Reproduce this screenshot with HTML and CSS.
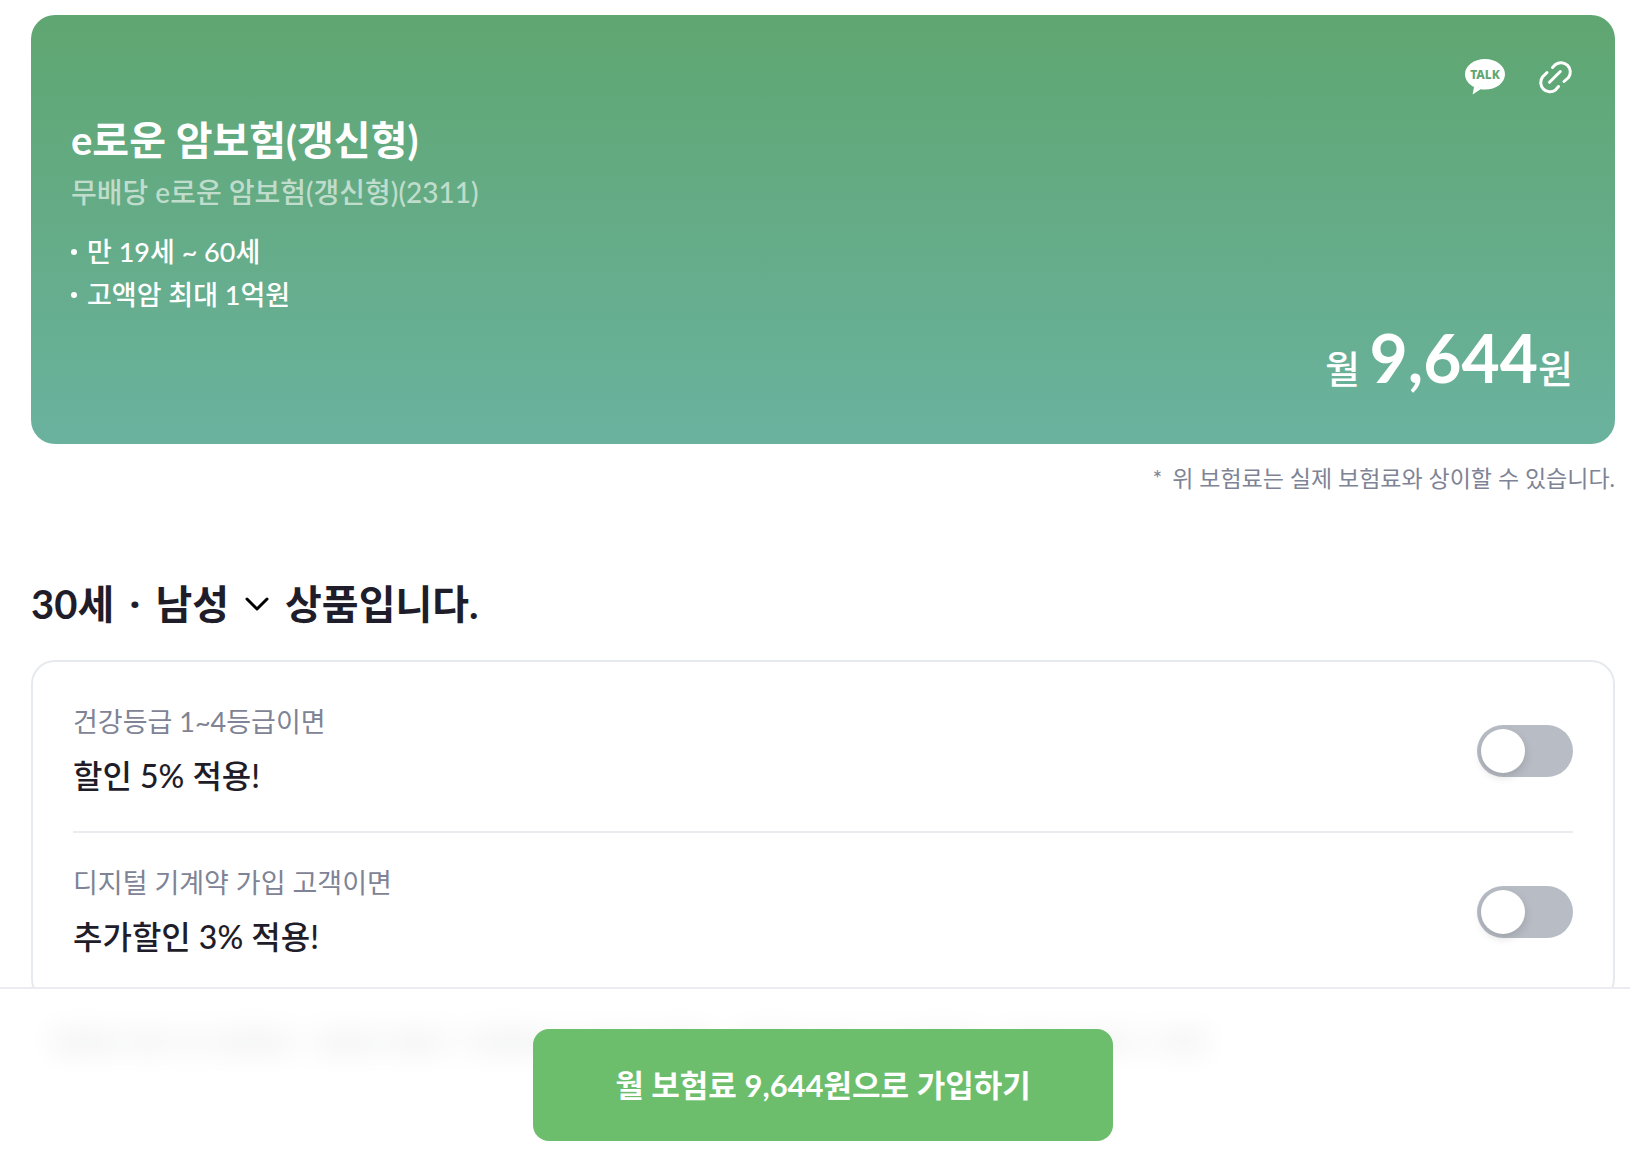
FILE: index.html
```html
<!DOCTYPE html>
<html lang="ko">
<head>
    <meta charset="UTF-8">
    <meta name="viewport" content="width=device-width, initial-scale=1.0">
    <title>e로운 암보험(갱신형)</title>
    <link rel="stylesheet" href="styles.css">
</head>
<body>
    <main class="page">
        <section class="product">
            <div class="share">
                <button type="button" class="icon-btn" aria-label="카카오톡 공유">
                    <svg width="40" height="36" viewBox="0 0 40 36">
                        <path d="M20 0C9 0 0 6.700 0 15.200c0 5.300 3.600 10 9 12.800L7.600 35.500l8-5.200c1.400.2 2.900.3 4.400.3 11 0 20-6.900 20-15.400S31 0 20 0z" fill="#fff"/>
                        <text x="20" y="20" text-anchor="middle" class="talk">TALK</text>
                    </svg>
                </button>
                <button type="button" class="icon-btn" aria-label="링크 복사">
                    <svg width="35" height="34" viewBox="0 0 35 34" fill="none" stroke="#fff" stroke-width="3" stroke-linecap="round">
                        <path d="M14.500 7.500l3-3a9.300 9.300 0 0 1 13 13L26 21.500"/>
                        <path d="M9 12.500l-4.500 4.500a9.300 9.300 0 0 0 13 13L20.500 26.500"/>
                        <path d="M11.500 22.300L22.300 11.500"/>
                    </svg>
                </button>
            </div>
            <h1 class="product-name">e로운 암보험(갱신형)</h1>
            <p class="product-full">무배당 e로운 암보험(갱신형)(2311)</p>
            <ul class="features">
                <li>만 19세 ~ 60세</li>
                <li>고액암 최대 1억원</li>
            </ul>
            <p class="price">월 <strong>9,644</strong>원</p>
        </section>
        <p class="notice"><span class="star">*</span>위 보험료는 실제 보험료와 상이할 수 있습니다.</p>

        <h2 class="target">
            <button type="button" class="target-btn">
                <span>30세<span class="dot">·</span>남성</span>
                <svg width="24" height="14" viewBox="0 0 24 14" fill="none" stroke="#000" stroke-width="3" stroke-linecap="round" stroke-linejoin="round">
                    <path d="M2 2l10 10L22 2"/>
                </svg>
            </button>
            <span>상품입니다.</span>
        </h2>

        <section class="discounts">
            <div class="discount">
                <label for="health">
                    <span class="cond">건강등급 1~4등급이면</span>
                    <span class="benefit">할인 5% 적용!</span>
                </label>
                <input type="checkbox" id="health" class="toggle">
            </div>
            <div class="discount">
                <label for="digital">
                    <span class="cond">디지털 기계약 가입 고객이면</span>
                    <span class="benefit">추가할인 3% 적용!</span>
                </label>
                <input type="checkbox" id="digital" class="toggle">
            </div>
        </section>
        <div class="behind"></div>
    </main>

    <footer class="bottom">
        <button type="button" class="join">월 보험료 9,644원으로 가입하기</button>
    </footer>
</body>
</html>
```

FILE: styles.css
```css
* {
    box-sizing: border-box;
}

body {
    margin: 0;
    font-family: Lato, "Noto Sans CJK KR", sans-serif;
    color: #1f1d29;
    background-color: #fff;
}

h1, h2, p, ul {
    margin: 0;
    padding: 0;
}

button {
    font-family: inherit;
    border: none;
    cursor: pointer;
}

.page {
    padding: 15px 15px 0 31px;
}

.product {
    display: flex;
    flex-direction: column;
    padding: 44px 42px 40px 40px;
    border-radius: 24px;
    color: #fff;
    background: linear-gradient(180deg, #5fa671, #6ab29e);
}

.share {
    display: flex;
    justify-content: flex-end;
    align-items: center;
    gap: 33px;
}

.icon-btn {
    padding: 0;
    background: none;
}

.icon-btn svg {
    display: block;
    overflow: visible;
}

.talk {
    font: 800 12px "Noto Sans", sans-serif;
    fill: #5fa671;
}

.product-name {
    margin-top: 15px;
    font-size: 40px;
    line-height: 60px;
    font-weight: 700;
}

.product-full {
    font-size: 28px;
    line-height: 44px;
    font-weight: 500;
    color: rgba(255, 255, 255, 0.6);
}

.features {
    margin-top: 16px;
    list-style: none;
    font-size: 27px;
    line-height: 43px;
    font-weight: 500;
}

.features li {
    display: flex;
    align-items: center;
    gap: 10px;
}

.features li::before {
    content: "";
    width: 6px;
    height: 6px;
    border-radius: 50%;
    background-color: #fff;
}

.price {
    margin-top: 6px;
    text-align: right;
    font-size: 38px;
    line-height: 72px;
    font-weight: 500;
}

.price strong {
    font-size: 66px;
    font-weight: 700;
}

.notice {
    margin-top: 16px;
    text-align: right;
    font-size: 23px;
    line-height: 36px;
    color: #7e8395;
}

.star {
    margin-right: 10px;
}

.target {
    display: flex;
    align-items: center;
    gap: 16px;
    margin-top: 78px;
    font-size: 40px;
    line-height: 60px;
    font-weight: 700;
}

.target-btn {
    display: flex;
    align-items: center;
    gap: 16px;
    padding: 0;
    color: inherit;
    font-size: inherit;
    line-height: inherit;
    font-weight: inherit;
    background: none;
}

.dot {
    margin: 0 15px;
    font-family: "Noto Sans", sans-serif;
}

.discounts {
    margin-top: 26px;
    padding: 9px 40px 10px;
    border: 2px solid #e6eaee;
    border-radius: 24px;
}

.discount {
    display: flex;
    justify-content: space-between;
    align-items: center;
    height: 160px;
}

.discount + .discount {
    border-top: 2px solid #ebebf0;
}

.cond,
.benefit {
    display: block;
}

.cond {
    margin-bottom: 2px;
    font-size: 27px;
    line-height: 48px;
    color: #7e8395;
}

.benefit {
    font-size: 32px;
    line-height: 56px;
    font-weight: 500;
}

.toggle {
    appearance: none;
    width: 96px;
    height: 52px;
    margin: 0;
    padding: 4px;
    border-radius: 26px;
    background-color: #b8bdc5;
    cursor: pointer;
}

.toggle::before {
    content: "";
    display: block;
    width: 44px;
    height: 44px;
    border-radius: 50%;
    background-color: #fff;
    box-shadow: 0 4px 10px rgba(0, 0, 0, 0.14);
}

.toggle:checked {
    background-color: #6cbe6c;
}

.toggle:checked::before {
    margin-left: auto;
}

.behind {
    width: 73%;
    height: 22px;
    margin: 28px 20px 0;
    background:
        repeating-linear-gradient(90deg, rgba(90, 96, 110, 0.3) 0 60px, transparent 60px 86px),
        repeating-linear-gradient(90deg, rgba(90, 96, 110, 0.3) 0 110px, transparent 110px 137px);
}

.bottom {
    position: fixed;
    left: 0;
    right: 0;
    bottom: 0;
    display: flex;
    justify-content: center;
    padding: 40px 15px 21px 31px;
    border-top: 2px solid #ebebf0;
    background-color: rgba(255, 255, 255, 0.84);
    backdrop-filter: blur(14px);
}

.join {
    width: 580px;
    height: 112px;
    padding: 0 0 4px;
    border-radius: 16px;
    color: #fff;
    font-size: 31px;
    font-weight: 700;
    background-color: #6cbe6c;
}
```
